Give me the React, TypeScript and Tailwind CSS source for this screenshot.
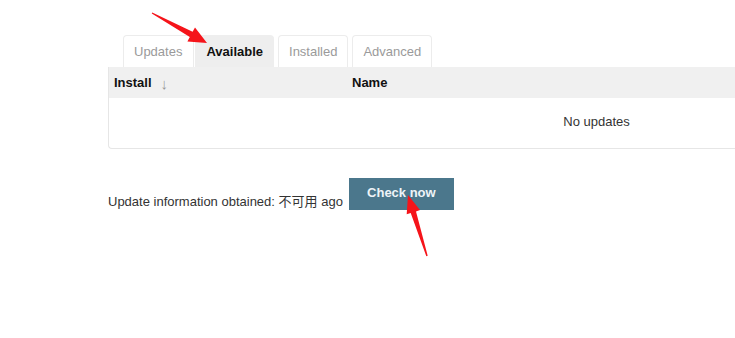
const TABS = ['Updates', 'Available', 'Installed', 'Advanced'];

function Arrows() {
  return (
    <svg
      className="pointer-events-none absolute left-0 top-0"
      width={735}
      height={338}
      viewBox="0 0 735 338"
    >
      <polygon
        fill="#f5141a"
        points="207,43 187.4,41.4 189.8,37 151.76,13.44 152.24,12.56 192.6,31.7 195,27.4"
      />
      <polygon
        fill="#f5141a"
        points="408,195 420,210.1 416,211.4 427.7,255.8 426.3,256.2 410.7,213 406.7,214.3"
      />
    </svg>
  );
}

export default function App() {
  return (
    <div
      className="relative h-[338px] w-[735px] overflow-hidden bg-white text-[13px] text-[#333]"
      style={{ fontFamily: '"Liberation Sans", Arial, "Noto Sans CJK SC", sans-serif' }}
    >
      <div className="pl-[108px] pt-[35px]">
        <div className="flex pl-[15px]">
          {TABS.map((t) => {
            const active = t === 'Available';
            return (
              <div
                key={t}
                className={`flex h-[32px] items-center rounded-t-[4px] border border-b-0 ${
                  active
                    ? 'mr-[4px] border-[#eeeeee] bg-[#eeeeee] px-[10px] font-bold text-[#111]'
                    : 'border-[#ececec] bg-white text-[#9a9a9a]'
                } ${t === 'Updates' ? 'mr-px pl-[10px] pr-[11px]' : ''} ${
                  t === 'Installed' || t === 'Advanced' ? 'mr-[4px] px-[10px]' : ''
                }`}
              >
                {t}
              </div>
            );
          })}
        </div>

        <div className="w-[976px] rounded-bl-[4px] border-b border-l border-[#e6e6e6]">
          <div className="flex h-[31px] items-center bg-[#f0f0f0] font-bold text-[#111]">
            <div className="flex w-[243px] items-center pl-[5px]">
              Install
              <span className="ml-[9px] translate-y-[2px] text-[15px] font-normal text-[#999]">↓</span>
            </div>
            <div>Name</div>
          </div>
          <div className="flex h-[50px] items-center justify-center pb-[2px] text-[#333]">
            No updates
          </div>
        </div>

        <div className="mt-[29px] flex items-end">
          <span className="leading-[16px]">Update information obtained: 不可用 ago</span>
          <button className="ml-[6px] h-[32px] w-[105px] bg-[#4b778c] pb-[2px] font-bold text-[#eef4f8]">
            Check now
          </button>
        </div>
      </div>
      <Arrows />
    </div>
  );
}
